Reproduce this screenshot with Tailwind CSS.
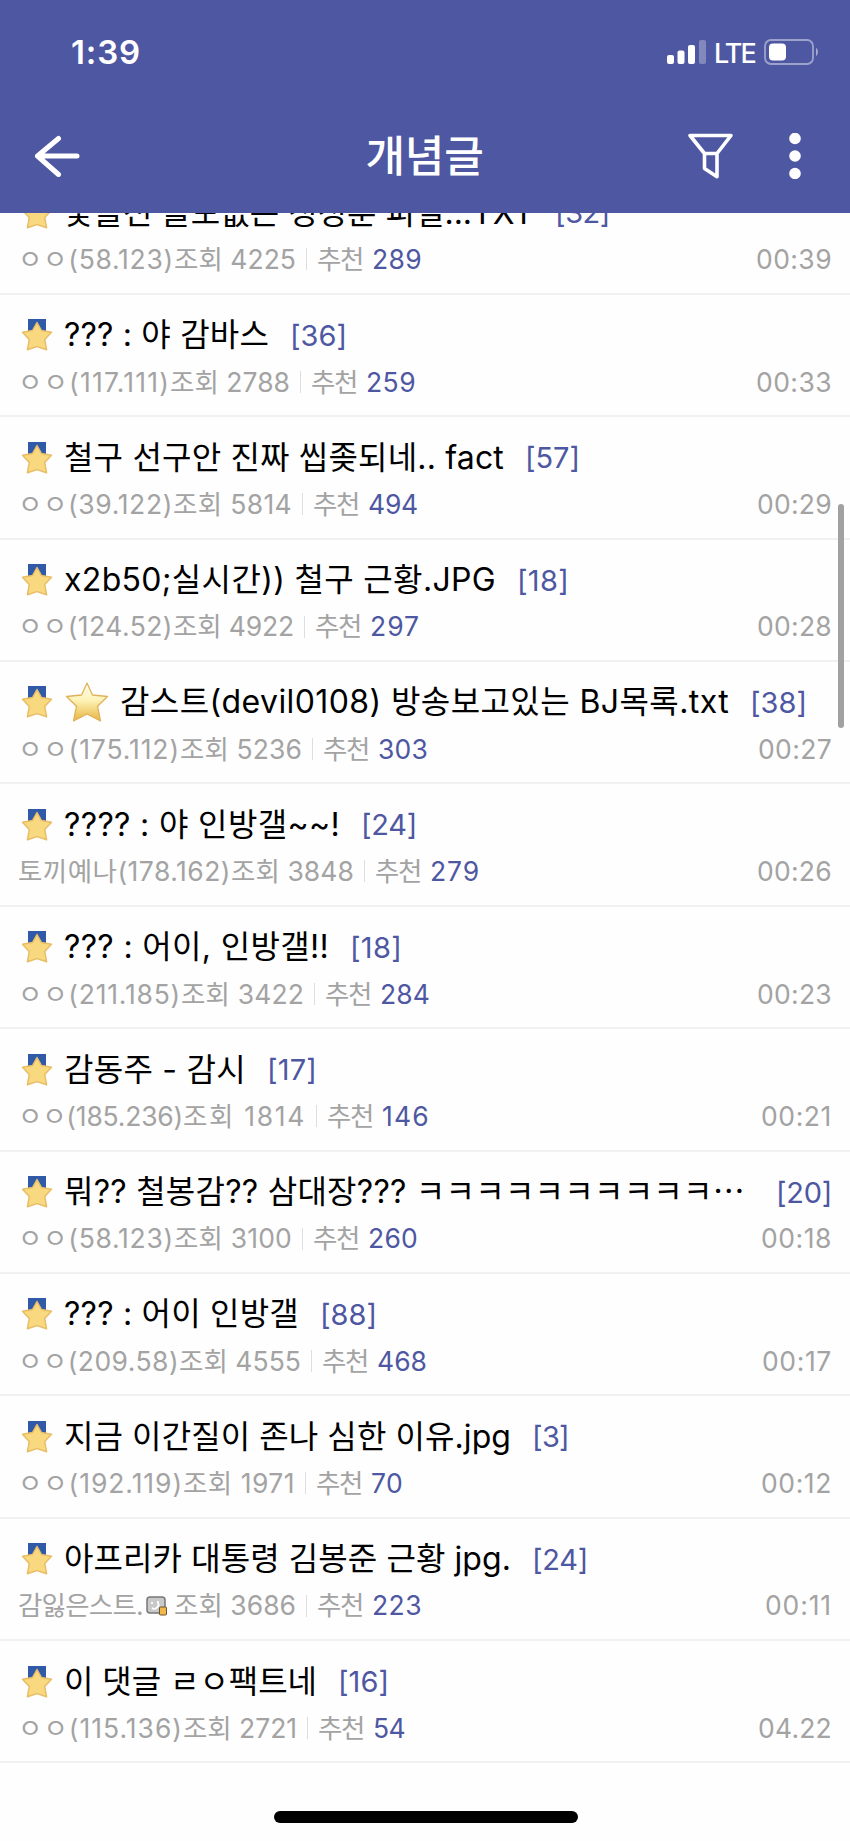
<!DOCTYPE html>
<html lang="ko"><head><meta charset="utf-8"><title>개념글</title>
<script src="https://cdn.jsdelivr.net/npm/@tailwindcss/browser@4"></script></head>
<body class="bg-[#fefefe] font-['Inter','Noto_Sans_CJK_KR',sans-serif]">
<svg class="absolute h-0 w-0">
<defs><linearGradient id="g" x1="0" y1="0" x2="0" y2="1"><stop offset="0" stop-color="#fffef0"/><stop offset=".45" stop-color="#fdf3b8"/><stop offset="1" stop-color="#e8b440"/></linearGradient></defs>
<symbol id="medal" viewBox="0 0 32 34"><rect x="7" y="1" width="18" height="14" fill="#3059a8"/><path d="M16 4.500 20.500 12.500 30.500 14.200 23.700 21.400 25.600 31.800 16 28.600 6.400 31.800 8.300 21.400 1.500 14.200 11.500 12.500Z" fill="#f8d97f" stroke="#e8bd66" stroke-width="1.500" stroke-linejoin="round"/></symbol>
<symbol id="star" viewBox="0 0 44 42"><path d="M22 2 27.500 14 42.500 15.500 32.500 25.200 35.500 40 22 33 8.500 40 11.500 25.200 1.500 15.500 16.500 14Z" fill="url(#g)" stroke="#dfb25a" stroke-width="1.300" stroke-linejoin="round"/></symbol>
<symbol id="badge" viewBox="0 0 22 20"><rect x="1" y="1" width="18" height="16" rx="3" fill="#c9c9c9" stroke="#777" stroke-width="1.500"/><path d="M6 6v2M12 5v3M6 12c3 2 6 0 7-4" fill="none" stroke="#fff" stroke-width="1.800"/><rect x="13.500" y="11" width="7" height="8" rx="1" fill="#f3b84b" stroke="#6b5535"/></symbol>
</svg>
<div class="flex h-[1841px] w-[850px] flex-col overflow-hidden">
<header class="z-10 flex h-[213px] shrink-0 flex-col bg-[#4e57a1] text-white">
<div class="flex h-[104px] items-center justify-between pl-[71px] pr-[30px]">
<span class="text-[33px] font-semibold leading-none" data-w="70">1:39</span>
<div class="flex items-center">
<svg class="h-6 w-10" viewBox="0 0 40 24"><g fill="#fff"><rect x="1" y="15" width="7" height="9" rx="2"/><rect x="11.500" y="10.500" width="7" height="13.500" rx="2"/><rect x="22" y="5" width="7" height="19" rx="2"/><rect x="33" y="0" width="7" height="24" rx="2" opacity=".3"/></g></svg>
<span class="ml-2 mt-[2px] text-[27px] font-medium leading-none" data-w="41">LTE</span>
<svg class="ml-[9px] h-[26px] w-14" viewBox="0 0 56 26"><rect x="1" y="1" width="48" height="24" rx="6" fill="none" stroke="#fff" stroke-opacity=".45" stroke-width="1.800"/><rect x="5" y="4.500" width="17" height="17" rx="4" fill="#fff"/><path d="M52 8.500q4 4.500 0 9z" fill="#fff" fill-opacity=".5"/></svg>
</div></div>
<div class="grid h-[104px] grid-cols-[1fr_auto_1fr] items-center pl-[34px] pr-[49px]">
<svg class="-ml-px h-[42px] w-[47px]" viewBox="0 0 47 42" fill="none" stroke="#fff" stroke-width="5" stroke-linecap="round" stroke-linejoin="round"><path d="M25.500 3.500 4.500 21l21 18.500M4.500 21h39.500"/></svg>
<h1 class="relative left-[7px] text-[43px] font-medium leading-none" data-w="118">개념글</h1>
<div class="flex items-center justify-end">
<svg class="h-[46px] w-[46px]" viewBox="0 0 46 46" fill="none" stroke="#fff" stroke-width="3.600" stroke-linejoin="round"><path d="M3 2.500h41L30 20.500v23.300l-12.500-8.300v-15ZM3 2.500l14.500 18H30"/></svg>
<svg class="ml-[56px] h-[46px] w-3" viewBox="0 0 12 46" fill="#fff"><circle cx="6" cy="5.500" r="5.800"/><circle cx="6" cy="23" r="5.800"/><circle cx="6" cy="40.500" r="5.800"/></svg>
</div></div></header>
<main id="list" class="-mt-[40.600px] flex flex-col"></main>
</div>
<div class="absolute left-[838px] top-[504px] h-[224px] w-[6px] rounded-full bg-[#a1a1a1]"></div>
<div class="absolute left-[274px] top-[1811px] h-[12px] w-[304px] rounded-full bg-black"></div>
<script>
// title, title width, replies, replies width, author, views offset, views, views width, votes offset, votes, time, time width
const rows=[
['꽃을선 쓸모없는 정정훈 피셜...TXT',470,'32',55,'ㅇㅇ(58.123)',174,4225,122,316,289,'00:39',76],
['??? : 야 감바스',205,'36',57,'ㅇㅇ(117.111)',170,2788,120,311,259,'00:33',76],
['철구 선구안 진짜 씹좆되네.. fact',440,'57',55,'ㅇㅇ(39.122)',173,5814,119,312,494,'00:29',75],
['x2b50;실시간)) 철구 근황.JPG',432,'18',52,'ㅇㅇ(124.52)',173,4922,121,315,297,'00:28',75],
['감스트(devil0108) 방송보고있는 BJ목록.txt',609,'38',57,'ㅇㅇ(175.112)',180,5236,122,322,303,'00:27',74],
['???? : 야 인방갤~~!',276,'24',56,'토끼예나(178.162)',231,3848,123,376,279,'00:26',75],
['??? : 어이, 인방갤!!',265,'18',52,'ㅇㅇ(211.185)',181,3422,123,324,284,'00:23',75],
['감동주 - 감시',182,'17',50,'ㅇㅇ(185.236)',183,1814,123,326,146,'00:21',71],
['뭐?? 철봉감?? 삼대장??? ㅋㅋㅋㅋㅋㅋㅋㅋㅋㅋ⋯',681,'20',56,'ㅇㅇ(58.123)',174,3100,118,313,260,'00:18',71],
['??? : 어이 인방갤',235,'88',57,'ㅇㅇ(209.58)',179,4555,122,322,468,'00:17',70],
['지금 이간질이 존나 심한 이유.jpg',447,'3',37,'ㅇㅇ(192.119)',183,1971,112,315,70,'00:12',71],
['아프리카 대통령 김봉준 근황 jpg.',447,'24',56,'감잃은스트.',174,3686,122,318,223,'00:11',67],
['이 댓글 ㄹㅇ팩트네',253,'16',51,'ㅇㅇ(115.136)',183,2721,114,319,54,'04.22',74]];
document.getElementById('list').innerHTML=rows.map((r,i)=>`<article class="flex h-[122.400px] shrink-0 flex-col border-b-2 border-[#f1f1f2] pl-[18px] pr-[18px]">
<div class="mt-[19.500px] flex h-[42px] items-center whitespace-nowrap">
<svg class="ml-[3px] h-[34px] w-[32px] shrink-0"><use href="#medal"/></svg>
<div class="ml-[11px] flex items-center text-[32px] leading-none text-black">${i==4?'<svg class="mr-[11px] ml-[1px] h-[42px] w-[44px] shrink-0"><use href="#star"/></svg>':''}<span data-w="${r[1]}">${r[0]}</span></div>
<span class="${i==8?'ml-[31px]':'ml-[21px]'} text-[29px] leading-none text-[#4e57a1]" data-w="${r[3]}">[${r[2]}]</span></div>
<div class="mt-[8.500px] flex h-[34px] items-center whitespace-nowrap text-[26.500px] leading-none text-[#a3a3a3]">
<span class="flex shrink-0 items-center" style="width:${r[5]-18}px"><span data-w="${i==11?125:r[5]-18}">${r[4]}</span>${i==11?'<svg class="ml-[3px] h-5 w-[22px] shrink-0"><use href="#badge"/></svg>':''}</span>
<span data-w="${r[7]}">조회 ${r[6]}</span>
<span class="ml-[10px] mr-[10px] h-[22px] w-px bg-[#dedede]"></span>
<span data-w="46">추천</span>
<span class="ml-[9px] text-[#4e57a1]" data-w="${String(r[9]).length==2?32:r[9]==146?48:50}">${r[9]}</span>
<span class="ml-auto" data-w="${r[11]}">${r[10]}</span></div></article>`).join('');
const fit=()=>document.querySelectorAll('[data-w]').forEach(e=>{e.style.display='inline-block';e.style.flexShrink=0;e.style.letterSpacing='0px';const n=[...e.textContent].length,w=e.getBoundingClientRect().width;e.style.letterSpacing=(e.dataset.w-w)/n+'px'});
addEventListener('load',()=>{fit();document.fonts.ready.then(fit)});
</script>
</body></html>
